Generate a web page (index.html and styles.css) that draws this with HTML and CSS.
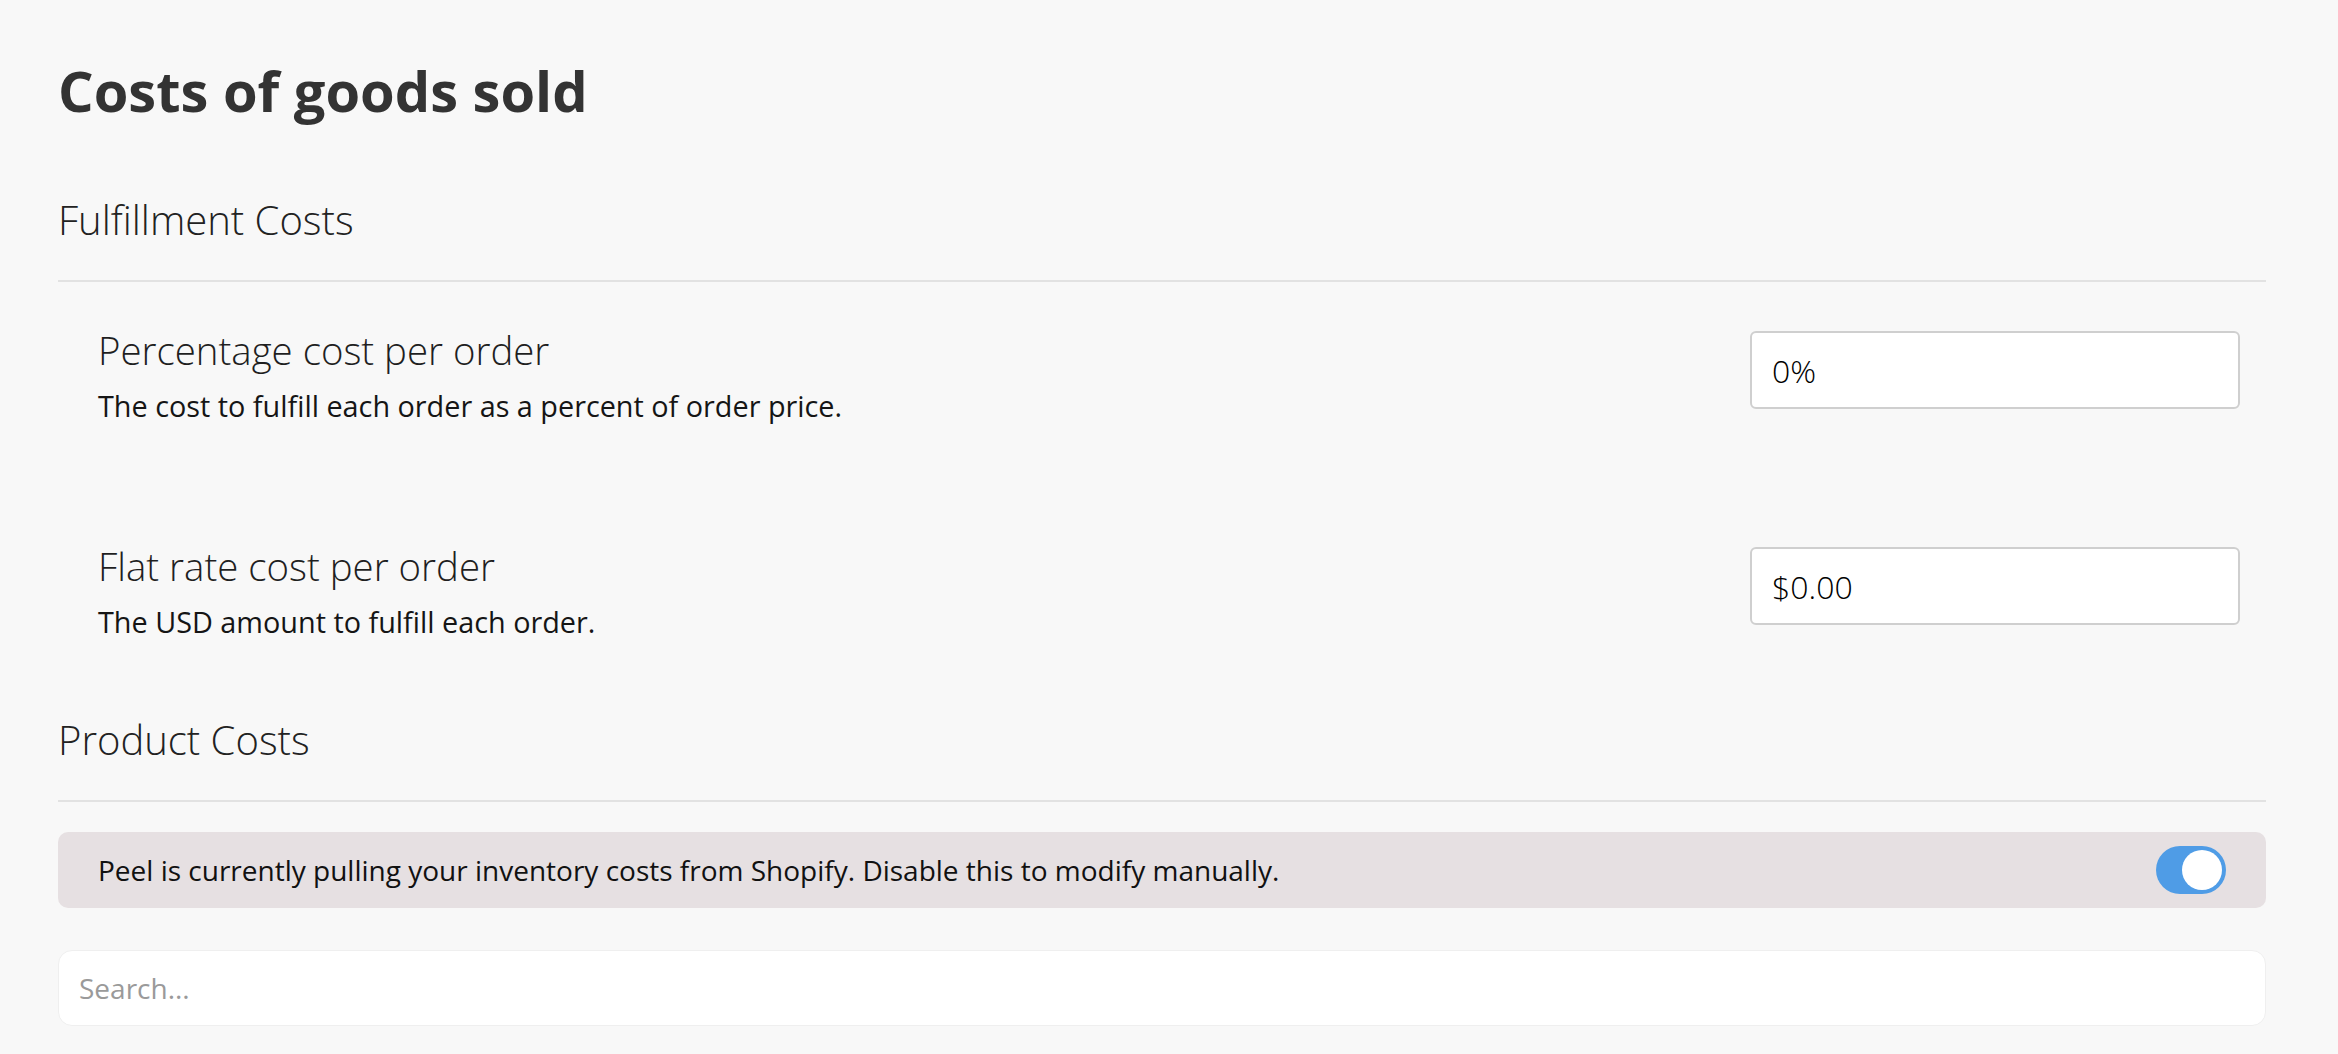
FILE: index.html
```html
<!DOCTYPE html>
<html lang="en">
<head>
<meta charset="utf-8">
<title>Costs of goods sold</title>
<link rel="stylesheet" href="styles.css">
</head>
<body>
<main class="page">
  <h1 class="title">Costs of goods sold</h1>

  <section class="section">
    <h2 class="section-head">Fulfillment Costs</h2>
    <div class="row">
      <div class="row-text">
        <div class="row-label">Percentage cost per order</div>
        <div class="row-desc">The cost to fulfill each order as a percent of order price.</div>
      </div>
      <input class="field" type="text" value="0%">
    </div>
    <div class="row">
      <div class="row-text">
        <div class="row-label">Flat rate cost per order</div>
        <div class="row-desc">The USD amount to fulfill each order.</div>
      </div>
      <input class="field" type="text" value="$0.00">
    </div>
  </section>

  <section class="section">
    <h2 class="section-head section-head--second">Product Costs</h2>
    <div class="banner">
      <span class="banner-text">Peel is currently pulling your inventory costs from Shopify. Disable this to modify manually.</span>
      <span class="toggle"><span class="knob"></span></span>
    </div>
    <input class="search" type="text" placeholder="Search...">
  </section>
</main>
</body>
</html>
```

FILE: styles.css
```css
* { box-sizing: border-box; }

html, body {
  margin: 0;
  padding: 0;
  background: #f8f8f8;
}

body {
  font-family: "Open Sans", "Noto Sans", sans-serif;
  color: #1a1a1a;
}

.page {
  padding: 56px 72px 0 58px;
}

.title {
  margin: 0 0 72px;
  font-size: 56px;
  line-height: 68px;
  font-weight: 700;
  color: #333333;
}

.section-head {
  margin: 0;
  font-size: 40px;
  line-height: 48px;
  font-weight: 300;
  color: #222222;
  padding-bottom: 36px;
  border-bottom: 2px solid #e2e2e2;
}

.section-head--second {
  margin-top: 2px;
}

.row {
  display: flex;
  justify-content: space-between;
  align-items: flex-start;
  padding: 45px 26px 73px 40px;
}

.row-label {
  font-size: 38.4px;
  line-height: 46px;
  font-weight: 300;
  color: #1f1f1f;
}

.row-desc {
  margin-top: 14px;
  font-size: 28.8px;
  line-height: 38px;
  font-weight: 400;
  color: #151515;
}

.field {
  margin-top: 4px;
  width: 490px;
  height: 78px;
  border: 2px solid #cfcfcf;
  border-radius: 6px;
  background: #ffffff;
  padding: 0 20px;
  font-family: "Open Sans", "Noto Sans", sans-serif;
  font-size: 32px;
  font-weight: 300;
  color: #000000;
  outline: none;
}

.banner {
  margin-top: 30px;
  height: 76px;
  background: #e6e0e2;
  border-radius: 10px;
  display: flex;
  align-items: center;
  justify-content: space-between;
  padding: 0 40px;
}

.banner-text {
  font-size: 28px;
  font-weight: 400;
  color: #111111;
}

.toggle {
  position: relative;
  width: 70px;
  height: 48px;
  border-radius: 24px;
  background: #4f9ce6;
}

.knob {
  position: absolute;
  top: 4px;
  right: 4px;
  width: 40px;
  height: 40px;
  border-radius: 50%;
  background: #ffffff;
}

.search {
  display: block;
  margin-top: 42px;
  width: 100%;
  height: 76px;
  background: #ffffff;
  border: 1px solid #efefef;
  border-radius: 14px;
  padding: 0 20px;
  font-family: "Open Sans", "Noto Sans", sans-serif;
  font-size: 28px;
  color: #1a1a1a;
  outline: none;
}

.search::placeholder {
  color: #9a9a9a;
}
```
